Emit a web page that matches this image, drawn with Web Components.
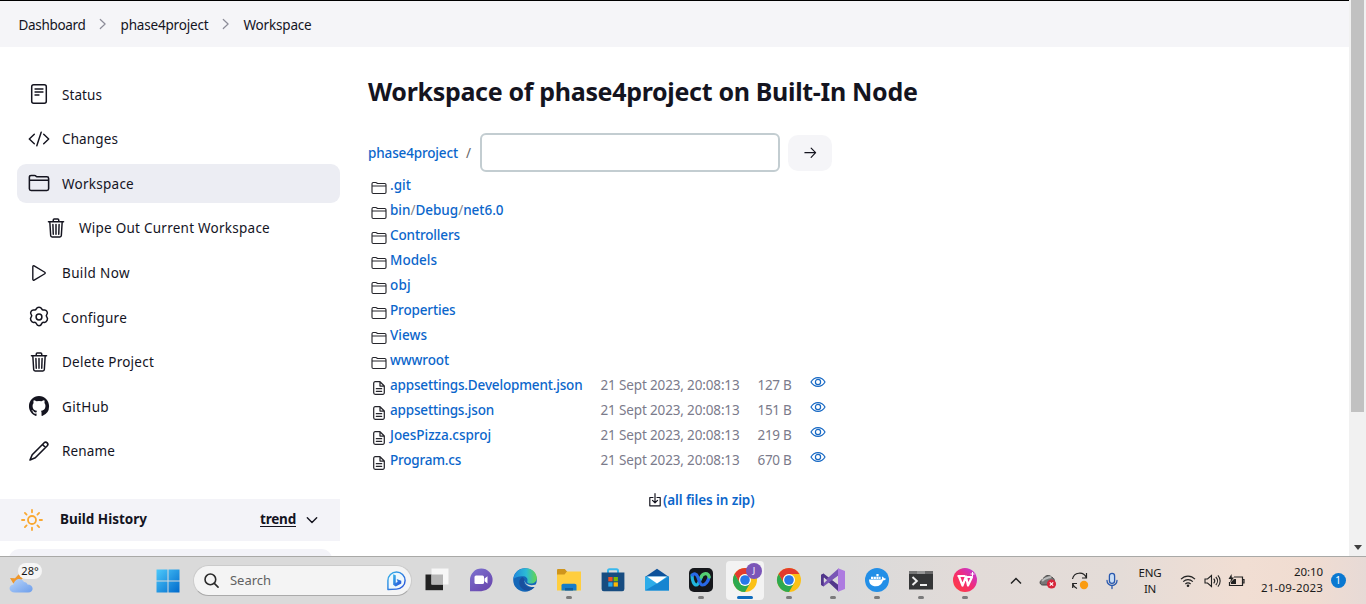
<!DOCTYPE html>
<html lang="en">
<head>
<meta charset="utf-8">
<title>Workspace of phase4project</title>
<style>
html,body{margin:0;height:100%;overflow:hidden;background:#fff}
body{font-family:"Noto Sans","Open Sans",sans-serif;font-size:13.5px;color:#14141f}
</style>
</head>
<body>
<desktop-shell></desktop-shell>
<script>
const define = (name, css, html) => customElements.define(name, class extends HTMLElement {
  connectedCallback() {
    if (this.shadowRoot) return;
    const root = this.attachShadow({ mode: 'open' });
    root.innerHTML = `<style>*{box-sizing:border-box}${css}</style>` + (typeof html === 'function' ? html(this) : html);
  }
});

const line = 'fill="none" stroke="currentColor" stroke-linecap="round" stroke-linejoin="round"';
const chrome = `<circle cx="12" cy="12" r="12" fill="#fbc116"/><path d="M1.6 6A12 12 0 0 1 22.4 6H12a6 6 0 0 0-5.2 9z" fill="#e33b2e"/><path d="M1.6 6 6.8 15 12 18l5.2-3L12 24A12 12 0 0 1 1.6 6z" fill="#2da94f"/><circle cx="12" cy="12" r="6" fill="#fff"/><circle cx="12" cy="12" r="4.8" fill="#2878e8"/>`;
const trash = `<g ${line} stroke-width="34"><path d="m112 112 20 320c.95 18.490 14.400 32 32 32h184c17.670 0 30.870-13.510 32-32l20-320" /><path d="M80 112h352M192 112V72a24 24 0 0 1 24-24h80a24 24 0 0 1 24 24v40M256 176v224M184 176l8 224M328 176l-8 224"/></g>`;
const icons = {
  status: ['0 0 22 22', `<g ${line} stroke-width="1.5"><rect x="3.700" y="1.800" width="14.600" height="18.400" rx="2"/><path d="M7 6h8M7 9h8M7 12h4" stroke-width="1.300"/></g>`],
  code: ['0 0 22 22', `<path d="M6.300 6.200 1.300 11l5 4.800M15.700 6.200l5 4.800-5 4.800M13.200 4.200 8.800 17.800" ${line} stroke-width="1.450"/>`],
  folder: ['0 0 512 512', `<g ${line} stroke-width="36"><path d="M440 432H72a40 40 0 0 1-40-40V120a40 40 0 0 1 40-40h75.890a40 40 0 0 1 22.190 6.720l27.840 18.560a40 40 0 0 0 22.190 6.720H440a40 40 0 0 1 40 40v240a40 40 0 0 1-40 40zM32 192h448"/></g>`],
  trash: ['0 0 512 512', trash],
  play: ['0 0 512 512', `<path d="M112 111v290c0 17.440 17 28.520 31 20.160l247.900-148.370c12.120-7.250 12.120-26.330 0-33.580L143 90.840c-14-8.360-31 2.720-31 20.160z" ${line} stroke-width="32"/>`],
  gear: ['0 0 22 22', `<g ${line} stroke-width="1.500"><path d="M11 1.300c1.700 0 2.200.5 2.700 1.600.4.900 1.300 1.300 2.200 1.100 1.300-.3 2.200 0 3 1.300.8 1.300.8 2.200-.1 3.200-.7.800-.7 1.700 0 2.500.9 1 1 2 .3 3.400-.8 1.600-1.700 2.300-3.200 2-1-.2-1.800.2-2.200 1.200-.5 1.300-1 2.100-2.700 2.100s-2.200-.8-2.700-2.100c-.4-1-1.200-1.400-2.200-1.200-1.500.3-2.400-.4-3.200-2-.7-1.400-.6-2.400.3-3.400.7-.8.7-1.700 0-2.500-.9-1-.9-1.900-.1-3.200.8-1.300 1.700-1.600 3-1.300.9.200 1.800-.2 2.200-1.100.5-1.100 1-1.600 2.700-1.600z"/><circle cx="11" cy="11" r="2.900"/></g>`],
  github: ['0 0 16 16', `<path fill="currentColor" fill-rule="evenodd" d="M8 .8C3.900.8.700 4.100.7 8.200c0 3.300 2.100 6 5 7 .37.070.5-.16.5-.36v-1.350c-2 .44-2.500-.88-2.500-.88-.33-.85-.82-1.080-.82-1.080-.67-.46.05-.45.05-.45.740.05 1.130.76 1.130.76.66 1.140 1.720.8 2.140.62.070-.48.26-.8.470-1-1.630-.18-3.340-.8-3.340-3.650 0-.8.290-1.470.760-1.990-.080-.19-.33-.94.070-1.960 0 0 .620-.2 2.020.76a7 7 0 0 1 3.680 0c1.400-.95 2.010-.76 2.010-.76.4 1.020.150 1.770.070 1.960.470.520.75 1.180.75 1.990 0 2.850-1.710 3.470-3.350 3.650.27.230.5.680.5 1.370v2.020c0 .2.130.43.5.36a7.400 7.400 0 0 0 5-7C15.300 4.100 12.100.8 8 .8z"/>`],
  pencil: ['0 0 22 22', `<path d="m16.200 2.700-12 12L2 20l5.300-2.200 12-12a2.200 2.200 0 0 0-3.100-3.100zM14.500 4.500l3 3" ${line} stroke-width="1.600"/>`],
  sun: ['0 0 22 22', `<g fill="none" stroke="#f9a832" stroke-width="1.800" stroke-linecap="round"><circle cx="11" cy="11" r="4"/><path d="M11 1v2.300M11 18.700V21M1 11h2.300M18.700 11H21M3.900 3.900l1.700 1.700M16.400 16.400l1.700 1.700M3.900 18.100l1.700-1.700M16.400 5.600l1.700-1.700"/></g>`],
  chev: ['0 0 12 12', `<path d="m1.300 3.700 4.700 4.700 4.700-4.700" ${line} stroke-width="1.400"/>`],
  sep: ['0 0 12 12', `<path d="m3.300 1.500 4.800 4.500-4.800 4.500" ${line} stroke-width="1.200"/>`],
  arrow: ['0 0 14 14', `<path d="M1 7.500h12M8 2.300l5 5.200-5 5.200" ${line} stroke-width="1.300"/>`],
  file: ['0 0 12 14', `<g ${line} stroke-width="1.250"><path d="M7 .7H2.200A1.500 1.500 0 0 0 .7 2.200v9.600a1.500 1.500 0 0 0 1.500 1.500h7.600a1.500 1.500 0 0 0 1.500-1.500V5zM7 .7V5h4.300M3.300 7.700h5.400M3.300 10.300h5.400" /></g>`],
  eye: ['0 0 16 12', `<g ${line} stroke-width="1.200"><path d="M1 6c1.500-2.700 4-4.400 7-4.400S13.500 3.300 15 6c-1.500 2.700-4 4.400-7 4.400S2.500 8.700 1 6z"/><circle cx="8" cy="6" r="2.600"/></g>`],
  zip: ['0 0 12 14', `<path d="M4 4.500H.8v8.300h10.400V4.500H8M6 .7v9M3.500 7.400 6 9.800l2.500-2.400" ${line} stroke-width="1.200"/>`],
  windows: ['0 0 24 24', `<defs><linearGradient id="w" x2="1" y2="1"><stop stop-color="#4cc9fb"/><stop offset="1" stop-color="#0069cb"/></linearGradient></defs><path fill="url(#w)" d="M.5.5h11v11H.5zM12.500.5h11v11h-11zM.5 12.500h11v11H.5zM12.500 12.500h11v11h-11z"/>`],
  search: ['0 0 16 16', `<g fill="none" stroke="#2a2a2a" stroke-width="1.700" stroke-linecap="round"><circle cx="6.800" cy="6.800" r="5.700"/><path d="m11 11 4 4"/></g>`],
  bing: ['0 0 22 22', `<defs><linearGradient id="b" y2="1"><stop stop-color="#37b5e9"/><stop offset="1" stop-color="#274bd8"/></linearGradient></defs><path d="M2 20.500V11a9 9 0 1 1 9 9z" fill="#eef8fd" stroke="url(#b)" stroke-width="1.500" stroke-linejoin="round"/><path d="m7.500 4.500 2.700 1v8l2-1.300-1-2.900 4.800 1.900v3l-5.800 3-2.700-1.700z" fill="url(#b)"/>`],
  taskview: ['0 0 24 24', `<path fill="#222" d="M.5 6.500H18v15.700H.5z"/><path fill="#f7f7f7" d="M6.500.5h17v16h-17z"/><path fill="#b7b7b7" d="M6.500 6.500H18v10H6.500z"/>`],
  chat: ['0 0 24 24', `<defs><linearGradient id="c" x2=".7" y2="1"><stop stop-color="#7c72d0"/><stop offset="1" stop-color="#6a48ae"/></linearGradient></defs><path fill="url(#c)" d="M1 23.200V12A11.300 11.300 0 1 1 12 23.200z"/><rect x="5.500" y="7.500" width="9.500" height="8.500" rx="1.500" fill="#fff"/><path fill="#fff" d="m15.500 10.500 3-2.300v7.300l-3-2.300z"/>`],
  edge: ['0 0 24 24', `<defs><linearGradient id="e" x2="1"><stop stop-color="#2087dc"/><stop offset=".55" stop-color="#2bbbd6"/><stop offset="1" stop-color="#65d64d"/></linearGradient></defs><circle cx="12" cy="12" r="11.800" fill="#1467b8"/><path fill="url(#e)" d="M.3 11.500C1 4 6.500.2 12.500.2c7 0 11.300 5 11.300 9.800 0 3.500-2.600 5.500-6 5.500-2.500 0-4-.8-3.500-2.300 1-3-1.500-5-4.300-5C5.500 8.200 1 9.500.3 11.500z"/><path fill="#194f9e" d="M9.500 9c-4 2-4.500 8-.5 11.500 3.800 3.300 9.500 2.300 12.800-1.700-7 2.700-12.800-2.800-10.300-7.500z"/><path fill="#dadada" d="M11.700 12c-.2 3.600 4.300 6.300 10.500 4.700l1.400-1.300 1 1-2.400 2.500c-5.500 1-11.300-2.200-10.500-6.900z"/>`],
  explorer: ['0 0 24 24', `<path fill="#cf951c" d="M0 2.200C0 1.500.5 1 1.200 1h6.600l2.400 2.800L8 7H0z"/><path fill="#ffce3f" d="M0 6.500h7.500l2.500-3h14v19H0z"/><path fill="#157dca" d="M4.500 22.500v-5c0-1 .8-1.800 1.800-1.800h11.400c1 0 1.800.8 1.800 1.800v5z"/><path fill="#0e5d9d" d="M8 20h8v2.500H8z"/>`],
  store: ['0 0 24 24', `<path d="M7 6V2.800c0-.9.600-1.500 1.500-1.500h7c.9 0 1.500.6 1.500 1.500V6" fill="none" stroke="#38b8ed" stroke-width="2"/><path fill="#174c80" d="M.6 4.500h22.800V21a2.200 2.200 0 0 1-2.200 2.200H2.800A2.200 2.200 0 0 1 .6 21z"/><path fill="#f25022" d="M7.300 9h4.300v4.300H7.300z"/><path fill="#7fba00" d="M12.600 9h4.300v4.300h-4.300z"/><path fill="#29a8ed" d="M7.300 14.300h4.300v4.300H7.300z"/><path fill="#ffb900" d="M12.600 14.300h4.300v4.300h-4.300z"/>`],
  mail: ['0 0 24 24', `<path fill="#0d529b" d="M0 9 12 .8 24 9z"/><path fill="#2dace9" d="M0 8.500h24v14H0z"/><path fill="#1685d1" d="M0 22.500 24 8.500v14z"/><path fill="#fff" d="M2 8.500h20l-10 7z"/>`],
  webex: ['0 0 24 24', `<rect width="24" height="24" rx="5" fill="#15171b"/><path d="M3 7c0 6 2 10 4.300 10S11 12 12.500 8.500" fill="none" stroke="#21b5dc" stroke-width="3.200" stroke-linecap="round"/><path d="M3.500 7c1.500-1.800 4-1.500 5.300 2s2.300 8 4.700 8c3 0 6-4 6.500-8" fill="none" stroke="#2869e8" stroke-width="3.200" stroke-linecap="round"/><path d="M12.200 9c1.600-4 6.800-5 8 0" fill="none" stroke="#54cf72" stroke-width="3.200" stroke-linecap="round"/>`],
  chrome: ['0 0 24 24', chrome],
  vs: ['0 0 24 24', `<path fill="#51368b" d="M0 7l2.500-1.500L17.500 17v6.500L2.500 9.500v8L0 16z"/><path fill="#7956b5" d="M0 16 17.500.5 18 7 2.500 18.500z"/><path fill="#ad7be0" d="M17 .3 24 3v18l-7 2.700z"/><path fill="#51368b" d="M0 7 2.500 5.500v13L0 17z"/><path fill="#dadada" d="m3 9.500 3 2.700-3 2.700zM17 8v8l-5-4z"/>`],
  docker: ['0 0 24 24', `<circle cx="12" cy="12" r="12" fill="#238fe7"/><path fill="#fff" d="M4 11.500h12.500c.7-.5.8-1.500.3-2.700 1-.3 1.800.3 2.200 1.500.8-.2 1.500 0 2 .4-.5 1.200-1.400 1.700-2.900 1.700-1.200 3.800-3.600 5.900-7.300 5.900-4.300 0-6.600-2.300-6.800-6.800z"/><path fill="#fff" d="M6 8.700h2.200v2.200H6zM8.700 8.700h2.200v2.200H8.700zM11.400 8.700h2.200v2.200h-2.200zM11.400 6h2.200v2.200h-2.200zM14.100 8.700h1.500v2.200h-1.500z"/>`],
  terminal: ['0 0 24 24', `<path fill="#353637" d="M0 3h24v18.500H0z"/><path fill="#777" d="M0 3h8v3H0z"/><path fill="#959595" d="M8 3h8v3H8z"/><path fill="#696969" d="M16 3h8v3h-8z"/><path d="m3.500 9 4.300 4-4.300 4M11 17h7" fill="none" stroke="#eee" stroke-width="2"/>`],
  wps: ['0 0 24 24', `<defs><linearGradient id="p" x1="1" x2="0" y2="1"><stop stop-color="#b638ed"/><stop offset=".5" stop-color="#f42d73"/><stop offset="1" stop-color="#ff4035"/></linearGradient></defs><circle cx="12" cy="12" r="12" fill="url(#p)"/><path d="M4.500 8H12M5.800 8l3.700 9.500L13 8.500l2 9L19 9h-5" fill="none" stroke="#fff" stroke-width="2.200" stroke-linejoin="round"/><path d="M19.500 4v4M17.500 6h4" stroke="#fff" stroke-width="1"/>`],
  up: ['0 0 12 12', `<path d="M1 8.500 6 3.500l5 5" fill="none" stroke="#222" stroke-width="1.500"/>`],
  onedrive: ['0 0 18 16', `<path fill="#777" stroke="#444" d="M3.500 12C0 11.500.5 7 4 6.500 5 2.500 10.500 1 13 4.500c3 .5 3.500 6-1 7.500z"/><path d="M3 8c3-3.500 6-3 9-4" stroke="#bbb" stroke-width="2" fill="none"/><circle cx="12.500" cy="11" r="4.600" fill="#d7263b"/><path d="m10.800 9.300 3.400 3.400M14.200 9.300l-3.400 3.400" stroke="#fff" stroke-width="1.200"/>`],
  sync: ['0 0 18 18', `<g fill="none" stroke="#222" stroke-width="1.200"><path d="M1.500 7a7.300 7.300 0 0 1 13.800-1.500M15.500 1v5H11M6 16.500a7 7 0 0 1-4.200-4.700M1.700 16v-4.500H6"/></g><circle cx="13" cy="13" r="4.200" fill="#fa9c12"/>`],
  mic: ['0 0 14 18', `<g fill="none" stroke="#2858ae" stroke-width="1.300" stroke-linecap="round"><rect x="4.400" y="1.300" width="5.200" height="10" rx="2.600" fill="#c9def6"/><path d="M2 8.500a5 5 0 0 0 10 0M7 13.700v2.800"/></g>`],
  wifi: ['0 0 16 14', `<g fill="none" stroke="#222" stroke-width="1.200"><path d="M1 5.200c4-4.200 10-4.200 14 0M3.200 7.700c2.800-2.900 6.800-2.900 9.600 0M5.400 10c1.600-1.600 3.600-1.600 5.200 0"/></g><circle cx="8" cy="11.700" r="1.300" fill="#222"/>`],
  volume: ['0 0 17 14', `<path d="M1 5h2.500l4-3.500v11L3.500 9H1zM9.700 4.700c1.200 1.300 1.200 3.300 0 4.600M11.800 3c2.200 2.300 2.200 5.700 0 8M13.900 1.300c3 3.300 3 8.100 0 11.400" fill="none" stroke="#222" stroke-width="1.100"/>`],
  battery: ['0 0 17 14', `<path d="M6 3h8.500v8.500H1.500V8M14.500 5.500H16v3.500h-1.500" fill="none" stroke="#222" stroke-width="1.200"/><path d="M3 10V8l3-3h2v5zM3.500 0 .5 5H3l-1 4 4-5.500H3.800z" fill="#222"/>`],
  weather: ['0 0 26 26', `<defs><linearGradient id="cl" y2="1"><stop stop-color="#b9d5fa"/><stop offset="1" stop-color="#6d9eeb"/></linearGradient></defs><path fill="#ee972d" d="M1 9l5 .3L10 5l4 4-7 7-3-2z"/><path fill="url(#cl)" d="M6 23.500c-7 0-7-7.500-1.500-8 1-6 8-7.500 10.500-2.500 2 0 3 1 3.500 2.500 6.500 0 7 8 .5 8z"/>`]
};

define('ui-icon', `:host{display:inline-block;flex:none;width:var(--s,22px);height:var(--h,var(--s,22px))}svg{display:block;width:100%;height:100%;overflow:visible}`,
  el => { const [box, art] = icons[el.getAttribute('name')]; return `<svg viewBox="${box}" aria-hidden="true">${art}</svg>`; });

define('crumb-bar', `:host{display:flex;align-items:center;height:47px;padding:1px 0 0 18.500px;background:#f5f5f8;border-top:1px solid #000;box-sizing:border-box}
ui-icon{--s:12px;color:#8c8c98;margin:-1px 12px 0 11px}`,
  `<ui-text w="67">Dashboard</ui-text><ui-icon name="sep"></ui-icon><ui-text w="88">phase4project</ui-text><ui-icon name="sep"></ui-icon><ui-text w="68">Workspace</ui-text>`);

define('side-item', `:host{display:flex;align-items:center;gap:12px;height:38.600px;padding-left:11px;border-radius:9px}
:host([active]){background:#ecedf3}:host([nested]){padding-left:28px}ui-text{padding-top:.5px}`,
  el => `<ui-icon name="${el.getAttribute('icon')}"></ui-icon><ui-text w="${el.getAttribute('w')}">${el.getAttribute('label')}</ui-text>`);

define('build-history', `:host{display:block;margin-top:29px}
.head{display:flex;align-items:center;height:42px;padding:0 22px 0 21px;background:#f3f3f8;font-weight:700}
.head>ui-text{margin:-2px 0 0 17px}.head>.trend{margin-left:auto;--line:underline}
.c{--s:12px;margin-left:10px}.card{margin:8px 8px 0 9px;height:30px;border-radius:10px;background:#f3f3f8}`,
  `<div class="head"><ui-icon name="sun"></ui-icon><ui-text w="87">Build History</ui-text><ui-text class="trend" w="36">trend</ui-text><ui-icon class="c" name="chev"></ui-icon></div><div class="card"></div>`);

define('side-panel', `:host{display:block;flex:none;width:340px;padding-top:28px;box-sizing:border-box}nav{display:grid;gap:6px;padding-left:17px}`,
  `<nav>${[['status','Status',40],['code','Changes',56],['folder','Workspace',72,'active'],['trash','Wipe Out Current Workspace',191,'nested'],['play','Build Now',68],['gear','Configure',65],['trash','Delete Project',92],['github','GitHub',47],['pencil','Rename',53]]
    .map(([i,l,w,f='']) => `<side-item icon="${i}" label="${l}" w="${w}" ${f}></side-item>`).join('')}</nav><build-history></build-history>`);

define('path-bar', `:host{display:flex;align-items:center;height:39px}
a{color:#0b66cb;font-weight:550}.s{color:#666;margin:0 9px 0 8px;width:5px}
input{width:300px;height:39px;border:2px solid #c3cdd1;border-radius:6px;background:#fff;outline:0}
button{display:grid;place-items:center;width:44px;height:36px;margin-left:8px;border:0;border-radius:10px;background:#f5f5f8;color:#14141f;padding:0}ui-icon{--s:12.500px}`,
  `<a><ui-text w="90">phase4project</ui-text></a><span class="s">/</span><input aria-label="Path"><button aria-label="Go"><ui-icon name="arrow"></ui-icon></button>`);

define('file-row', `:host{display:grid;grid-template-columns:22px 210.500px 157px 52.500px 16px;height:25px;align-items:center;color:#7b7b8b}
a{color:#0b66cb;font-weight:550}i{font-style:normal;font-weight:400;color:#888}
.k{color:#26262c;--s:16px;margin:6px 0 0 3px}.f{color:#26262c;--s:12px;--h:14px;margin:6px 0 0 5px}.eye{color:#1668c4;--s:16px;--h:12px;margin-top:-6px}`,
  el => { const [n, w, size] = ['name','w','size'].map(a => el.getAttribute(a));
    return `<ui-icon class="${size ? 'f' : 'k'}" name="${size ? 'file' : 'folder'}"></ui-icon><a><ui-text w="${w}">${n.replaceAll('/', '<i>/</i>')}</ui-text></a>` +
      (size ? `<ui-text w="139">21 Sept 2023, 20:08:13</ui-text><ui-text w="34">${size}</ui-text><ui-icon class="eye" name="eye"></ui-icon>` : ''); });

define('main-panel', `:host{display:block;padding:24px 0 0 28px}
h1{margin:0 0 22px;font-size:25px;line-height:40px;font-weight:700}
.zip{display:flex;align-items:center;height:30px;margin:13px 0 0 281px;gap:2px;font-weight:600}.zip a{color:#0b66cb}.zip ui-icon{--s:12px;--h:14px}`,
  `<h1><ui-text w="549.500">Workspace of phase4project on Built-In Node</ui-text></h1><path-bar></path-bar><div class="files">${[['.git',21],['bin/Debug/net6.0',113.5],['Controllers',70],['Models',47],['obj',21],['Properties',65.5],['Views',37],['wwwroot',59],['appsettings.Development.json',192.5,'127 B'],['appsettings.json',104,'151 B'],['JoesPizza.csproj',101,'219 B'],['Program.cs',71,'670 B']]
    .map(([n,w,s]) => `<file-row name="${n}" w="${w}" ${s ? `size="${s}"` : ''}></file-row>`).join('')}</div><div class="zip"><ui-icon name="zip"></ui-icon><a><ui-text w="91.500">(all files in zip)</ui-text></a></div>`);

define('scroll-rail', `:host{display:flex;flex-direction:column;align-items:center;justify-content:space-between;flex:none;width:17px;background:#f1f1f1}
.t{width:13px;height:412px;background:#c1c1c1}.a{border:4px solid transparent;border-top:5px solid #404040;border-bottom:0;margin-bottom:6px}`,
  `<div class="t"></div><div class="a"></div>`);

define('task-app', `:host{display:flex;flex-direction:column;align-items:center;flex:none;position:relative;width:38px;height:39px;margin:0 3px;border-radius:4px;padding-top:7px;--s:24px;box-sizing:border-box}
:host([active]){background:#f3f3f3}.dot{width:6px;height:3px;border-radius:2px;background:#7b7b7b;margin-top:4px}
:host([active]) .dot{width:16px;background:#0f6cbd}.b{position:absolute;left:20px;top:2px;width:16px;height:16px;border-radius:50%;background:#7b55b8;color:#fff;font-size:9px;line-height:16px;text-align:center}`,
  el => `<ui-icon name="${el.getAttribute('icon')}"></ui-icon>${el.hasAttribute('open') ? '<div class="dot"></div>' : ''}${el.hasAttribute('active') ? '<span class="b">J</span>' : ''}`);

define('search-pill', `:host{display:flex;align-items:center;flex:none;box-sizing:border-box;width:219px;height:31px;padding:0 4px 0 10px;border:1px solid #cbcbcb;border-bottom-color:#aaa;border-radius:16px;background:#f4f4f4;color:#616161;font-size:13px}
.q{--s:15px}ui-text{margin:-2px 0 0 11px}.b{--s:21px;margin-left:auto}`,
  `<ui-icon class="q" name="search"></ui-icon><ui-text w="41">Search</ui-text><ui-icon class="b" name="bing"></ui-icon>`);

define('weather-chip', `:host{display:block;position:relative;width:34px;height:32px;margin-left:9px;flex:none;--s:26px}
ui-icon{margin-top:4px}span{position:absolute;left:9px;top:-2px;width:24px;height:16px;border-radius:8px;background:#f5f5f5;font-size:11px;line-height:16px;text-align:center;color:#111}`,
  `<ui-icon name="weather"></ui-icon><span>28°</span>`);

define('system-tray', `:host{display:flex;align-items:center;height:100%;margin-left:auto;padding-right:20.500px;font-size:11.500px;line-height:16px;color:#1a1a1a;box-sizing:border-box}
.cell{display:grid;place-items:center;width:32px}.lang{width:44px}.lang ui-text{justify-self:center}.sm{width:24px}.date{display:grid;width:75px;margin-top:-1px}.date ui-text{justify-self:end}
.n{width:15px;height:15px;border-radius:50%;background:#0a78d1;color:#fff;font-size:10px;line-height:15px;text-align:center;margin-left:7.500px}`,
  `<div class="cell" style="--s:12px"><ui-icon name="up"></ui-icon></div><div class="cell" style="--s:18px;--h:16px"><ui-icon name="onedrive"></ui-icon></div><div class="cell" style="--s:18px"><ui-icon name="sync"></ui-icon></div><div class="cell" style="--s:14px;--h:18px"><ui-icon name="mic"></ui-icon></div>
<div class="cell lang"><ui-text w="23">ENG</ui-text><ui-text w="12">IN</ui-text></div>
<div class="cell" style="--s:16px;--h:14px"><ui-icon name="wifi"></ui-icon></div><div class="cell sm" style="--s:17px;--h:14px;margin-left:-4px"><ui-icon name="volume"></ui-icon></div><div class="cell sm" style="--s:17px;--h:14px"><ui-icon name="battery"></ui-icon></div>
<div class="date"><ui-text w="29">20:10</ui-text><ui-text w="62">21-09-2023</ui-text></div><div class="n">1</div>`);

define('task-bar', `:host{display:flex;align-items:center;flex:none;height:48px;box-sizing:border-box;border-top:1px solid #a9a9a7;background:linear-gradient(90deg,#dadada 0 62%,#e2dbd8 71%,#e4dcd8 82%,#f1ded3 91%,#f0dcd1 96%,#e7dad6)}
.win{--s:24px;margin-left:113px}search-pill{margin:0 2px 0 13px}`,
  `<weather-chip></weather-chip><ui-icon class="win" name="windows"></ui-icon><search-pill></search-pill>${['taskview','chat','edge','explorer open','store','mail','webex open','chrome open active','chrome open','vs open','docker open','terminal open','wps open']
    .map((a, n) => { const [i, ...f] = a.split(' '); return `<task-app icon="${i}" ${n ? '' : 'style="margin-left:4px"'} ${f.join(' ')}></task-app>`; }).join('')}<system-tray></system-tray>`);

define('desktop-shell', `:host{display:flex;flex-direction:column;width:1366px;height:604px;overflow:hidden}
.view{display:flex;height:556px;overflow:hidden}.page{width:1349px}.cols{display:flex}`,
  `<div class="view"><div class="page"><crumb-bar></crumb-bar><div class="cols"><side-panel></side-panel><main-panel></main-panel></div></div><scroll-rail></scroll-rail></div><task-bar></task-bar>`);

/* Label that tracks its letters so the run fills the width given in "w". */
customElements.define('ui-text', class extends HTMLElement {
  connectedCallback() {
    if (this.shadowRoot) return;
    this.attachShadow({ mode: 'open' }).innerHTML = '<style>:host{display:inline-block;flex:none;justify-self:start;white-space:nowrap}span{display:inline-block;text-decoration:var(--line,none);text-underline-offset:2px}</style><span><slot></slot></span>';
    const run = this.shadowRoot.querySelector('span');
    const natural = run.getBoundingClientRect().width;
    run.style.letterSpacing = (this.getAttribute('w') - natural) / this.textContent.length + 'px';
  }
});
</script>
</body>
</html>
